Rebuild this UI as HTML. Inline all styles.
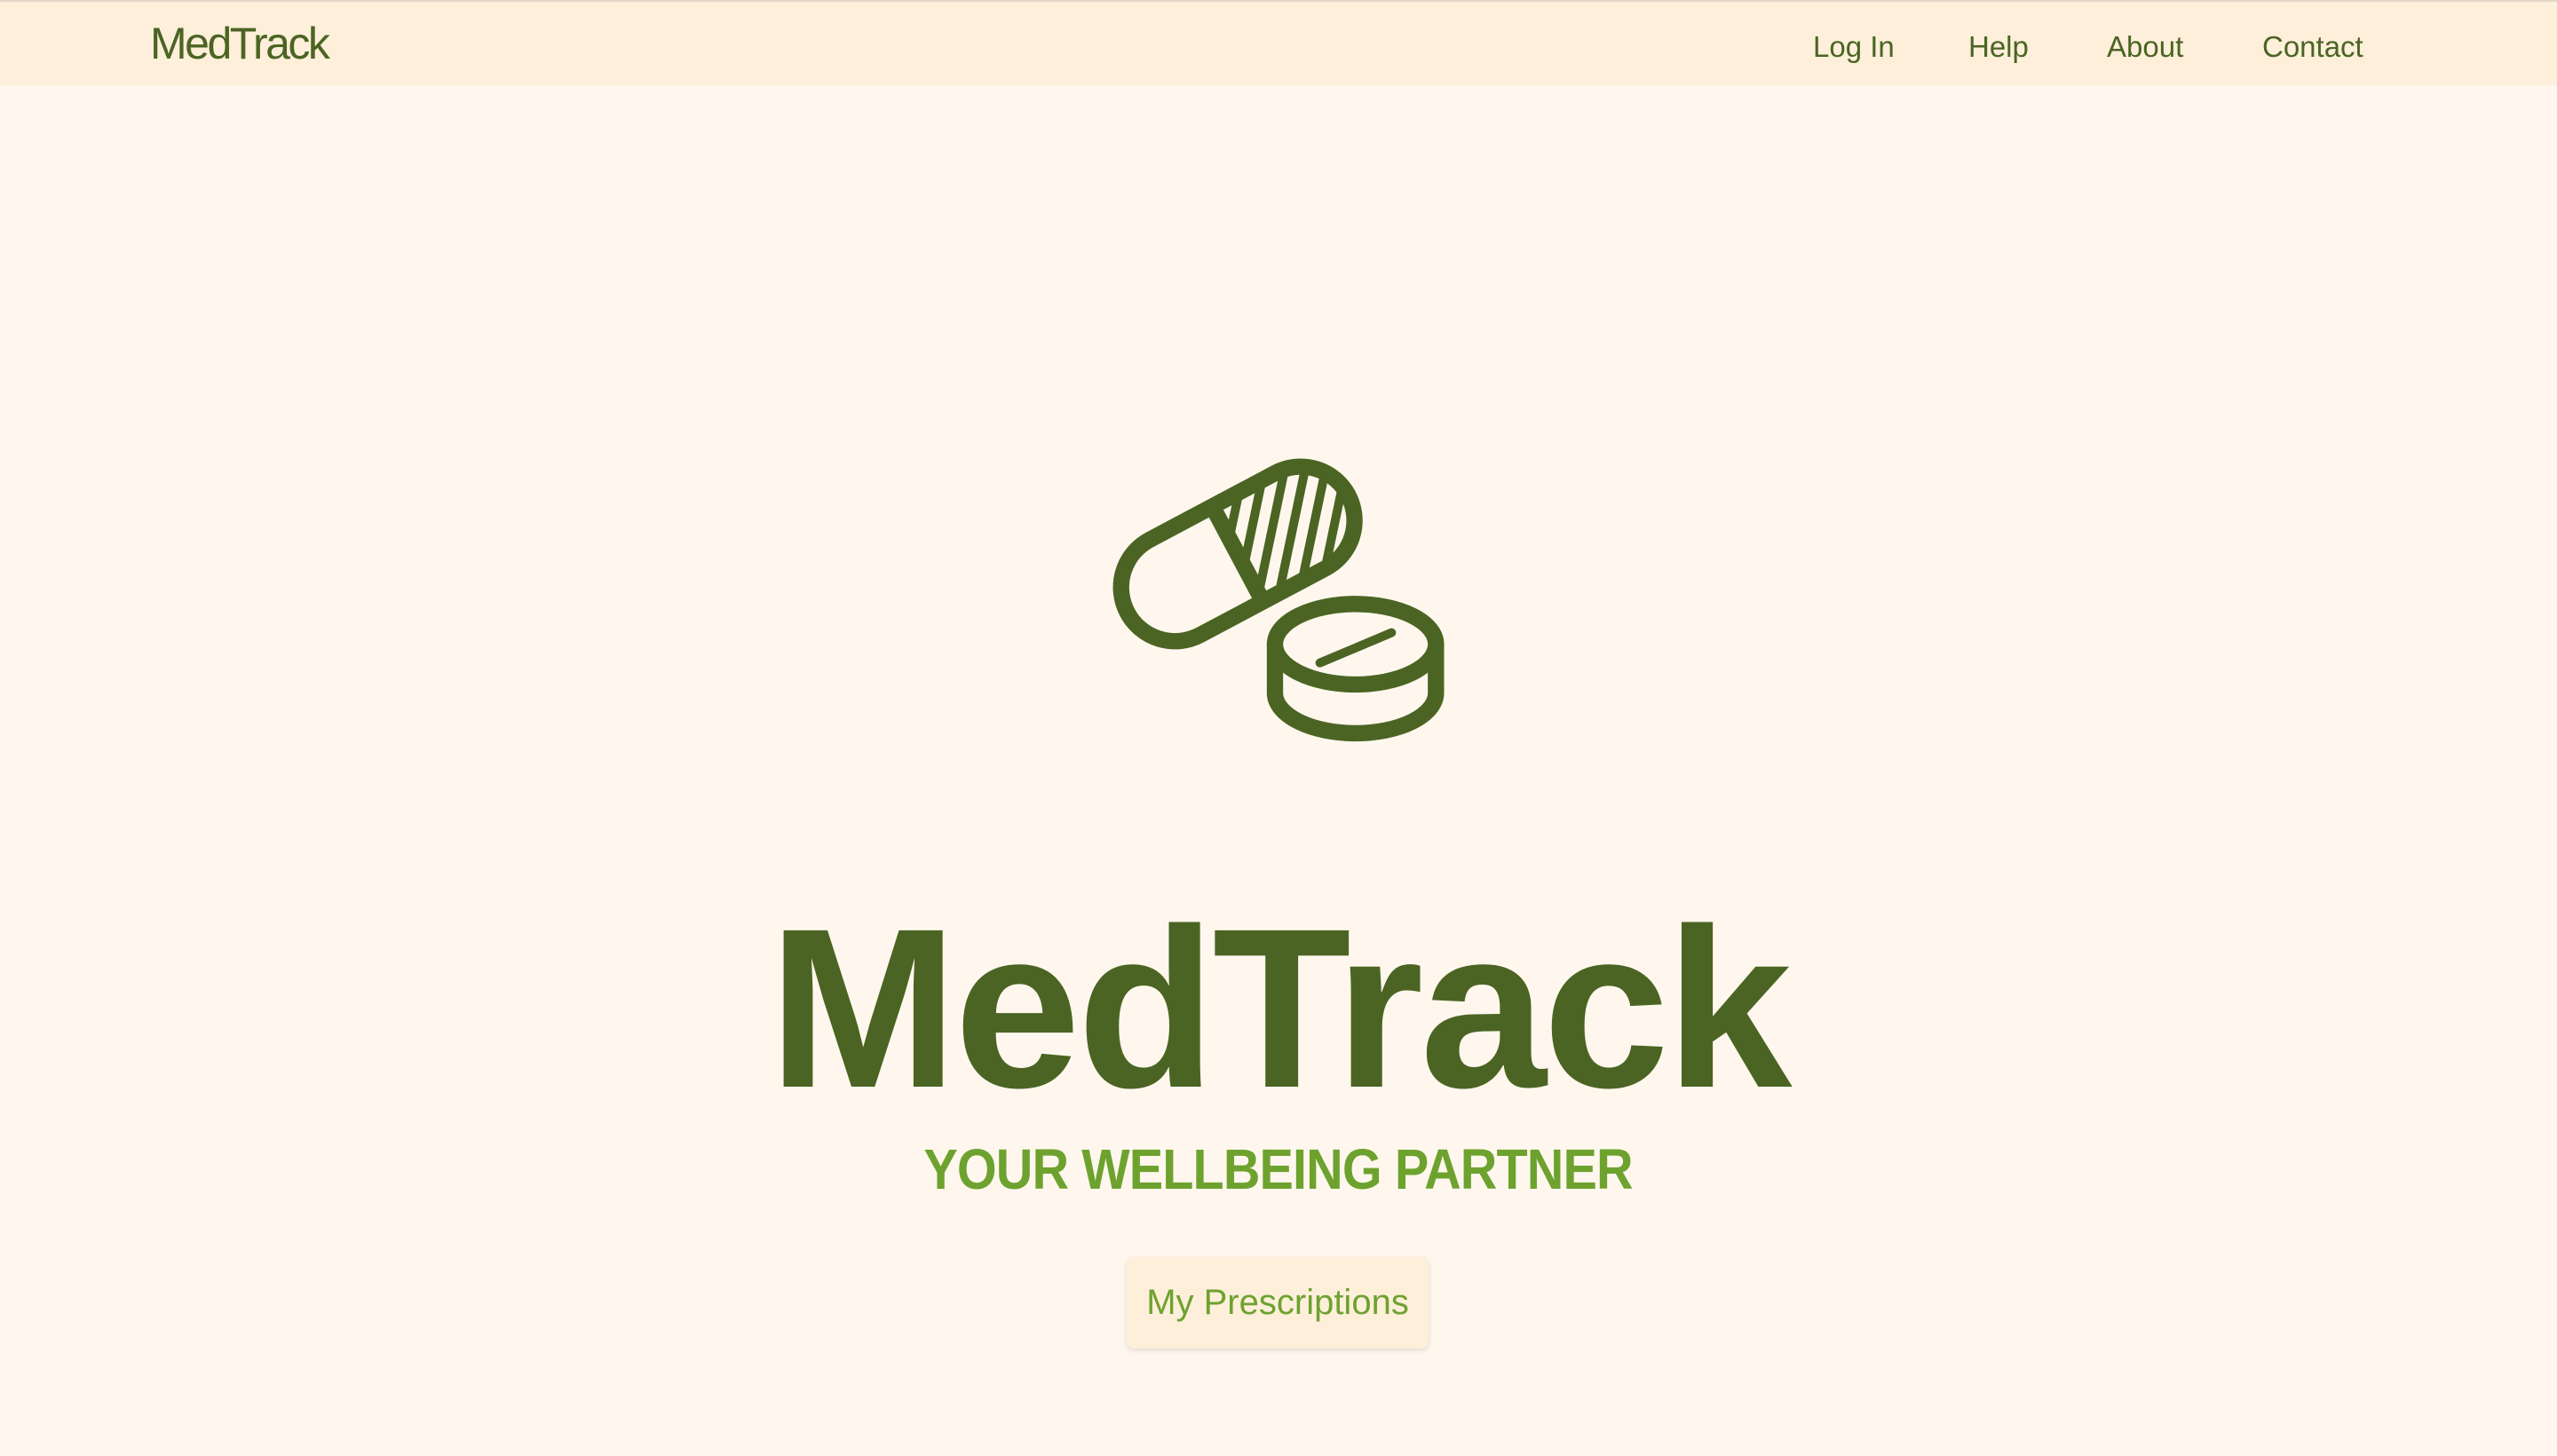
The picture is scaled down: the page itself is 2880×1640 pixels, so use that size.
<!DOCTYPE html>
<html><head><meta charset="utf-8"><style>
html,body{margin:0;padding:0;}
body{width:2880px;height:1640px;background:#fff7ed;position:relative;overflow:hidden;font-family:"Liberation Sans",sans-serif;}
.hdr{position:absolute;left:0;top:0;width:2880px;height:94px;background:#fdefda;border-top:2px solid #e2d8c8;}
.a{position:absolute;line-height:1;white-space:nowrap;}
.logo{left:169px;top:24px;font-size:50px;color:#4b6423;letter-spacing:-2.5px;}
.nav{top:36px;font-size:33px;color:#4b6423;}
.title{left:0;width:2880px;text-align:center;top:1008px;font-size:256px;font-weight:bold;color:#4b6423;letter-spacing:-4px;}
.sub{left:0;width:2880px;text-align:center;top:1285px;}
.sub span{display:inline-block;font-size:64px;font-weight:bold;color:#6ea22f;transform:scaleX(0.9);letter-spacing:-1px;}
.btn{position:absolute;left:1269px;top:1416px;width:340px;height:103px;background:#fdefda;border-radius:8px;box-shadow:0 2px 6px rgba(0,0,0,0.12);color:#6ea22f;font-size:40px;text-align:center;line-height:103px;}
</style></head><body>
<div class="hdr"></div>
<div class="a logo">MedTrack</div>
<div class="a nav" style="left:2042px">Log In</div>
<div class="a nav" style="left:2217px">Help</div>
<div class="a nav" style="left:2373px">About</div>
<div class="a nav" style="left:2548px">Contact</div>

<svg style="position:absolute;left:1220px;top:490px" width="420" height="370" viewBox="0 0 1260 1110">
<defs>
<clipPath id="rh"><path d="M0,-182 H240 A182,182 0 0 1 240,182 H0 Z"/></clipPath>
</defs>
<g transform="translate(522,402) rotate(-28)" stroke="#4b6423" fill="none">
<g clip-path="url(#rh)" stroke-width="30">
<line x1="117" y1="-200" x2="-217" y2="200"/>
<line x1="205" y1="-200" x2="-129" y2="200"/>
<line x1="293" y1="-200" x2="-41" y2="200"/>
<line x1="381" y1="-200" x2="47" y2="200"/>
<line x1="469" y1="-200" x2="135" y2="200"/>
<line x1="557" y1="-200" x2="223" y2="200"/>
<line x1="645" y1="-200" x2="311" y2="200"/>
</g>
<rect x="-422" y="-182" width="845" height="364" rx="182" stroke-width="55"/>
<line x1="0" y1="-182" x2="0" y2="182" stroke-width="55"/>
</g>
<g stroke="#4b6423" stroke-width="55" fill="none">
<path d="M648,707 V872 A272,136 0 0 0 1192,872 V707" fill="#fff7ed"/>
<ellipse cx="920" cy="707" rx="272" ry="136" fill="#fff7ed"/>
<line x1="800" y1="770" x2="1042" y2="668" stroke-width="30" stroke-linecap="round"/>
</g>
</svg>

<div class="a title">MedTrack</div>
<div class="a sub"><span>YOUR WELLBEING PARTNER</span></div>
<div class="btn">My Prescriptions</div>
</body></html>
